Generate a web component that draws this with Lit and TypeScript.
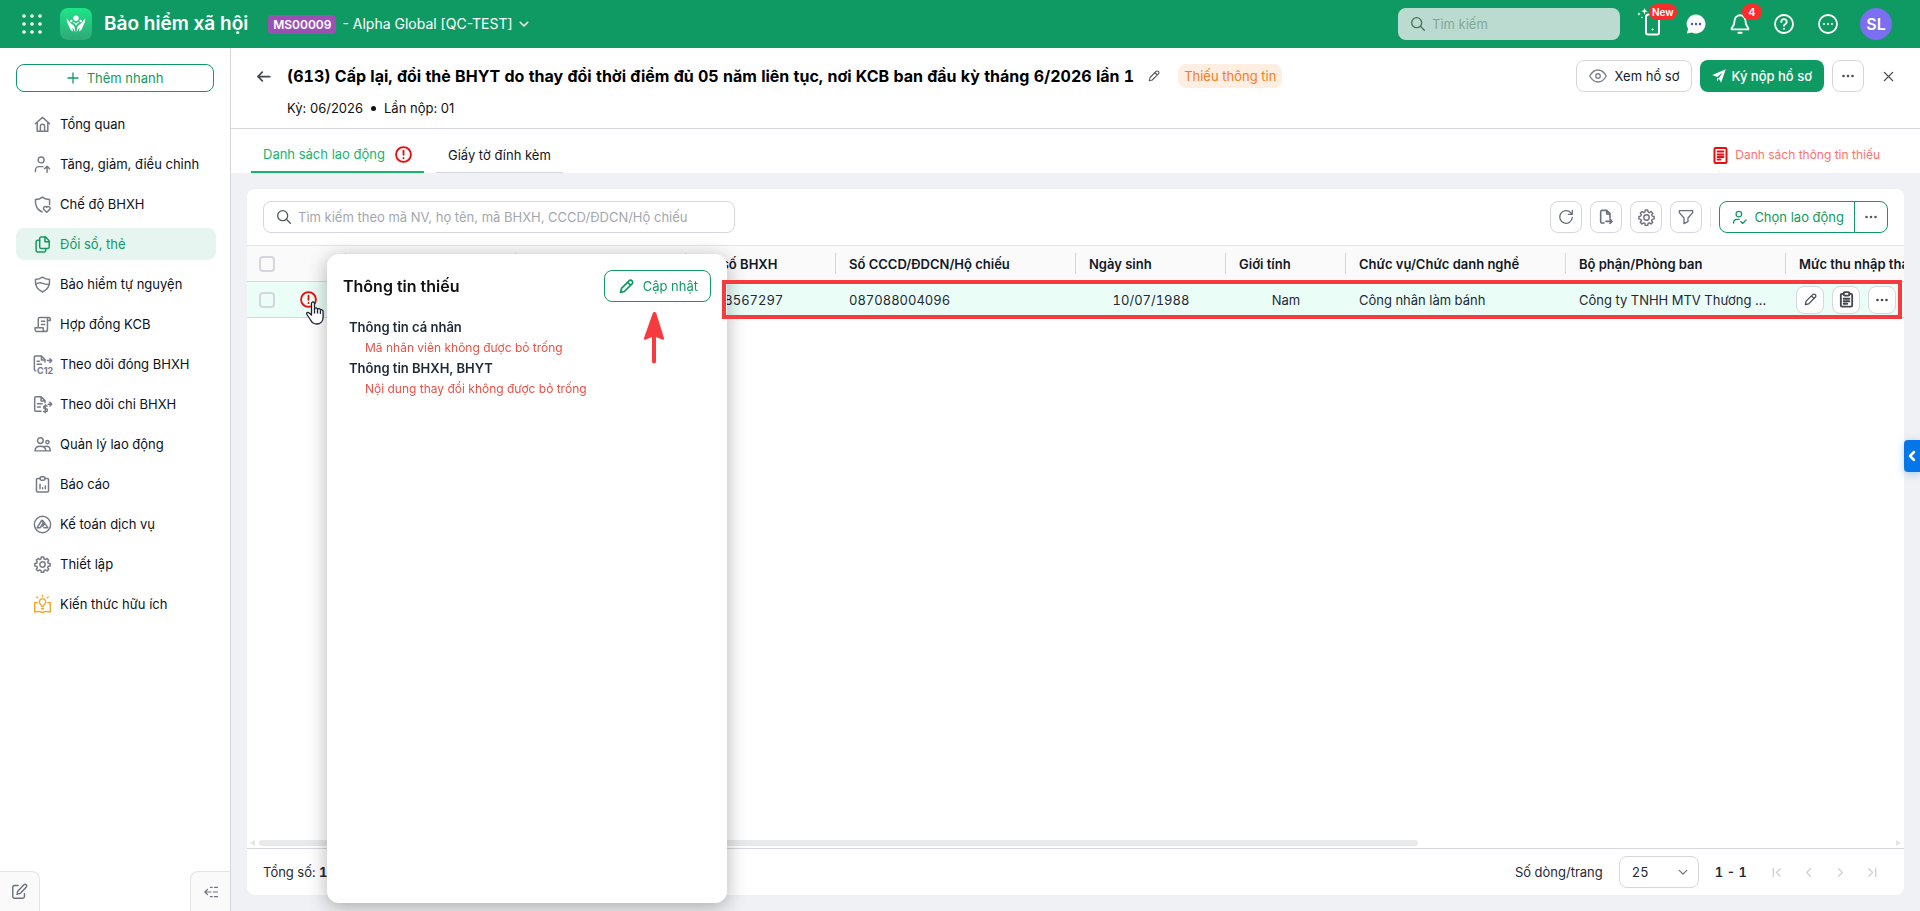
import { LitElement, html, css, svg, nothing, TemplateResult } from "lit";
import { customElement, property } from "lit/decorators.js";

/* Outline icons share a 24-unit grid and inherit the text colour. */
const ICONS: Record<string, TemplateResult> = {
  home: svg`<path d="M2 11 12 2l10 9M4.500 9v12.500h15V9M9 21.500v-7a3 3 0 0 1 6 0v7"/>`,
  userUp: svg`<circle cx="10" cy="5.500" r="4.200"/><path d="M2 22v-2a5 5 0 0 1 5-5h5.500M18.500 23v-8M15 18l3.500-3.500L22 18"/>`,
  shieldHeart: svg`<path d="M22 12V5c-4 0-7-1-10-3.500C9 4 6 5 2 5c-.500 8 2 14.500 9.500 17.500"/><path d="m18 23-4-3.800a2.500 2.500 0 0 1 4-3.400 2.500 2.500 0 0 1 4 3.400z"/>`,
  copyDoc: svg`<path d="M10 1.500h6.500l5 5.500v8.500a2 2 0 0 1-2 2H10a2 2 0 0 1-2-2v-12a2 2 0 0 1 2-2z"/><path d="M15.500 1.500V8h6M8 6H5a2 2 0 0 0-2 2v12.500a2 2 0 0 0 2 2h9.500a2 2 0 0 0 2-2v-3"/>`,
  shield: svg`<path d="M12 1.500c3 2.200 6 3.300 10 3.300.5 8-2 14.500-10 17.700C4 19.300 1.500 12.800 2 4.800c4 0 7-1.100 10-3.300z"/><path d="M2.500 12c3.500-2.500 6.500-3 9.500-1.500s6 1.500 9.500 1.500"/>`,
  scroll: svg`<path d="M6 16.500V4.500A2.500 2.500 0 0 1 8.500 2H21a2 2 0 0 1 2 2v2.500h-4M19 6.500v12.500a3 3 0 0 1-3 3H4.500a3 3 0 0 1-3-3v-2.500H13V19a3 3 0 0 0 3 3M10.500 7.500H15M10.500 12H15M19 6.500V4a2 2 0 0 1 2-2"/>`,
  docC12: svg`<path d="M2.500 21H2A1.500 1.500 0 0 1 .500 19.500v-18A1.500 1.500 0 0 1 2 0h8.500l5 5v3.500M10.500 0v5.500h5M4.500 7.500h3M4.500 11.500h6M19 6.500h5.500M22.500 4 25 6.500 22.500 9"/>`,
  docCoin: svg`<path d="M10 21.500H2.500A1.500 1.500 0 0 1 1 20V2.500A1.500 1.500 0 0 1 2.500 1H10l5.500 5.500V9.500M10 1v6h5.500M5 11h6.500M5 15.500h4M20 11.500h4.500M22.500 9l2.500 2.500-2.500 2.500M18.500 14h-3a1.900 1.900 0 0 0 0 4h1.500a1.900 1.900 0 0 1 0 4h-3.500M16 12.500v11"/>`,
  users: svg`<circle cx="9" cy="6.500" r="4"/><circle cx="19" cy="8.500" r="2.300"/><path d="M1.500 21c0-4.500 2.500-6.500 7.500-6.500s7.500 2 7.500 6.500zM15 14.800c4.500-1.500 8 1 8 6.200h-6.500"/>`,
  report: svg`<path d="M9 3.500H5A1.500 1.500 0 0 0 3.500 5v16A1.500 1.500 0 0 0 5 22.500h14a1.500 1.500 0 0 0 1.500-1.500V5A1.500 1.500 0 0 0 19 3.500h-4"/><rect x="8.500" y="1" width="7" height="5" rx="2"/><path d="M8.500 11.500v6.500M12.200 16.500V18M16 14v4"/>`,
  amis: svg`<circle cx="12" cy="12" r="11.500"/><path d="M4.500 16.500 11 6l2 3.500-4 7H4.500M12.500 14.500l2.500-4.500 4.500 6.500h-5.500M12.500 6.500l2.500 3.500"/>`,
  gear: svg`<circle cx="12" cy="12" r="3.800"/><path d="M10.300 1.500h3.400l.6 2.700 1.800.8 2.300-1.500 2.400 2.400-1.500 2.300.8 1.800 2.700.6v3.400l-2.700.6-.8 1.800 1.500 2.300-2.400 2.400-2.300-1.500-1.800.8-.6 2.700h-3.400l-.6-2.700-1.800-.8-2.300 1.500-2.400-2.400 1.500-2.300-.8-1.800-2.700-.6v-3.400l2.700-.6.8-1.800-1.500-2.300 2.400-2.400 2.300 1.500 1.800-.8z"/>`,
  idea: svg`<path d="M7.500 8a4.500 4.500 0 1 1 7 4c-1.200 1-1.400 1.800-1.500 3h-2c-.1-1.200-.3-2-1.500-3a5 5 0 0 1-2-4zM10.500 18h3M12 .5V-1M5 2.500 4 1.500M19 2.500l1-1M4.500 9.500H1V22.500c4-1 8-1 11 1 3-2 7-2 11-1V9.500h-3.500"/>`,
  plus: svg`<path d="M12 2v20M2 12h20"/>`,
  search: svg`<circle cx="10" cy="10" r="7.500"/><path d="m15.500 15.500 6 6"/>`,
  chevDown: svg`<path d="m3 8 9 9 9-9"/>`,
  chevLeft: svg`<path d="m16 4-8 8 8 8"/>`,
  chevRight: svg`<path d="m8 4 8 8-8 8"/>`,
  first: svg`<path d="M20 4l-8 8 8 8M5 3v18"/>`,
  last: svg`<path d="m4 4 8 8-8 8M19 3v18"/>`,
  back: svg`<path d="M22 12H3M10 5l-7 7 7 7"/>`,
  pencil: svg`<path d="m2.500 21.500 1.500-6.500L16 3a3.200 3.200 0 0 1 4.800 0 3.200 3.200 0 0 1 0 4.800L8.500 20zM14 5.500l4.500 4.500"/>`,
  eye: svg`<path d="M1 12c3-5.500 6.500-8 11-8s8 2.500 11 8c-3 5.500-6.500 8-11 8s-8-2.500-11-8z"/><circle cx="12" cy="12" r="3"/>`,
  close: svg`<path d="m3 3 18 18M21 3 3 21"/>`,
  refresh: svg`<path d="M21.500 12.500A9.500 9.500 0 1 1 19 5.500l2.500 2.500M21.500 2v6h-6"/>`,
  export: svg`<path d="M9 21H6a2 2 0 0 1-2-2V4a2 2 0 0 1 2-2h7l5 5v7M13 2v5.500h5M12 18.500h9M18 15.500l3 3-3 3"/>`,
  filter: svg`<path d="M2 2.500h20v3l-7 8V19l-6 3v-8.500l-7-8z"/>`,
  userCheck: svg`<circle cx="11" cy="6.500" r="4.500"/><path d="M2.500 21c0-4 2.500-6 6-6h3M14 18.500l3 3 5.500-5.500"/>`,
  clipboard: svg`<path d="M8 4H5.500A1.500 1.500 0 0 0 4 5.500v15A1.500 1.500 0 0 0 5.500 22h13a1.500 1.500 0 0 0 1.500-1.500v-15A1.500 1.500 0 0 0 18.500 4H16"/><rect x="8" y="1.500" width="8" height="5" rx="1.500"/><path d="M8 11h8M8 14.500h8M8 18h5"/>`,
  alert: svg`<circle cx="12" cy="12" r="10.500"/><path d="M12 6.500v6M12 17v.2"/>`,
  missing: svg`<rect x="3.500" y="1.500" width="17" height="21" rx="1.500"/><path d="M8 6.500h8M8 10.500h8M8 14h8M8 17.500h4"/>`,
  bell: svg`<path d="M12 1.500A6.500 6.500 0 0 0 5.500 8c0 5-1.500 6.500-3.500 9v1.500h20V17c-2-2.500-3.500-4-3.500-9A6.500 6.500 0 0 0 12 1.500zM10 22.500h4"/>`,
  help: svg`<circle cx="12" cy="12" r="10.800"/><path d="M8.800 9.500A3.200 3.200 0 1 1 13.500 12.200c-1 .6-1.500 1.100-1.500 1.800M12 17.500v.2"/>`,
  compose: svg`<path d="M10 3.500H5A2.500 2.500 0 0 0 2.500 6v13A2.500 2.500 0 0 0 5 21.500h11.500A2.500 2.500 0 0 0 19 19v-4M8.500 16l1-4.500 8.800-9a2.300 2.300 0 0 1 3.300 3.200L13 14.700z"/>`,
  collapse: svg`<path d="M12 12H2M6 7.500 1.500 12 6 16.500M11 4h3M18 4h5M16 12h7M11 20h3M18 20h5"/>`,
};

const DOTS = svg`<g fill="currentColor" stroke="none"><circle cx="3" cy="12" r="2.600"/><circle cx="12" cy="12" r="2.600"/><circle cx="21" cy="12" r="2.600"/></g>`;

function icon(name: string, size = 18, width = 2) {
  return html`<svg class="icon" width=${size} height=${size} viewBox="0 0 24 24" fill="none" stroke="currentColor"
    stroke-width=${width} stroke-linecap="round" stroke-linejoin="round" overflow="visible" aria-hidden="true">
    ${name === "dots" ? DOTS : ICONS[name]}
  </svg>`;
}

const base = css`
  * { box-sizing: border-box; }
  button, input, select { font: inherit; color: inherit; margin: 0; }
  button { cursor: pointer; padding: 0; background: none; border: 0; display: inline-flex; align-items: center; justify-content: center; white-space: nowrap; }
  a { color: inherit; text-decoration: none; }
  .icon { display: block; flex: none; }
  .outlined { height: 32px; border: 1px solid #d5d7dc; border-radius: 8px; background: #fff; }
  .square { width: 32px; color: #4b4f57; }
  .green { border-color: #109a63; color: #109a63; }
`;

@customElement("top-bar")
class TopBar extends LitElement {
  static styles = [base, css`
    :host { display: flex; align-items: center; height: 48px; background: #109a63; color: #fff; padding: 0 28px 0 20px; flex: none; }
    .apps { width: 24px; height: 24px; }
    .logo { margin-left: 16px; display: block; }
    .name { font-size: 19px; line-height: 28px; font-weight: 600; margin: 0 0 0 12px; white-space: nowrap; }
    .company { margin-left: 20px; gap: 6px; font-size: 14px; white-space: nowrap; }
    .code { background: #9b51b4; border-radius: 4px; padding: 0 5px; line-height: 19px; font-size: 12px; font-weight: 600; }
    .search { margin-left: auto; width: 222px; height: 32px; display: flex; align-items: center; gap: 6px; padding: 0 12px; background: #bcdbd0; border-radius: 8px; color: #47705f; }
    .search input { flex: 1; min-width: 0; border: 0; padding: 0; background: none; outline: 0; font-size: 13px; }
    .search input::placeholder { color: #82a799; opacity: 1; }
    .actions { display: flex; align-items: center; gap: 12px; margin-left: 16px; }
    .action { position: relative; width: 32px; height: 32px; }
    .badge { position: absolute; left: 18px; top: -4px; height: 16px; min-width: 20px; padding: 0 6px; border-radius: 8px; background: #fb2c2c; font-size: 11px; line-height: 16px; font-weight: 600; }
    .new { padding: 0 3px; left: 13px; font-size: 10px; }
    .avatar { width: 32px; height: 32px; border-radius: 50%; background: #7b6ef0; font-size: 16px; font-weight: 600; margin-left: 4px; }
  `];
  render() {
    return html`
      <button class="apps" aria-label="Ứng dụng">
        <svg width="20" height="20" viewBox="0 0 20 20" fill="#fff">
          ${[2, 10, 18].map((y) => [2, 10, 18].map((x) => svg`<circle cx=${x} cy=${y} r="1.800"/>`))}
        </svg>
      </button>
      <svg class="logo" width="32" height="32" viewBox="0 0 32 32" aria-hidden="true">
        <defs><linearGradient id="lg" x1="0" y1="0" x2="0" y2="1"><stop offset="0" stop-color="#1de587"/><stop offset="1" stop-color="#30a878"/></linearGradient></defs>
        <rect width="32" height="32" rx="8" fill="url(#lg)"/>
        <g fill="#fff"><circle cx="16" cy="10.300" r="2.700"/><circle cx="11.300" cy="13" r="1.200"/><circle cx="20.700" cy="13" r="1.200"/>
          <path d="M6.700 10.500c2.300 2 3.300 4.700 5.300 5.700 2.500 1.300 3.300 3.300 3.200 8.300-.6-2.500-1.700-3.800-3.200-4.800.7 1.300 1 2.300 1 3.800-2-.8-3-2.500-3.700-4.500C8.600 16.800 6.700 14.500 6.700 10.500z"/>
          <path d="M25.300 10.500c-2.300 2-3.300 4.700-5.300 5.700-2.500 1.300-3.300 3.300-3.200 8.300.6-2.500 1.700-3.800 3.200-4.800-.7 1.300-1 2.300-1 3.800 2-.8 3-2.500 3.700-4.500.7-2.200 2.600-4.500 2.600-8.500z"/>
          <path d="M12.500 14c1.800 0 2.800.6 3.500 1.500.7-.9 1.700-1.500 3.500-1.500-1.800.9-2.800 2.300-3.500 4-.7-1.700-1.700-3.100-3.500-4z"/></g>
      </svg>
      <h1 class="name">Bảo hiểm xã hội</h1>
      <button class="company"><span class="code">MS00009</span><span>- Alpha Global [QC-TEST]</span>${icon("chevDown", 10, 3.4)}</button>
      <label class="search">${icon("search", 16)}<input type="search" placeholder="Tìm kiếm" aria-label="Tìm kiếm" /></label>
      <div class="actions">
        <button class="action" aria-label="Ứng dụng di động">
          <svg width="32" height="32" viewBox="0 0 32 32" fill="none" stroke="#fff" stroke-width="2" stroke-linecap="round">
            <path d="M13 6.500h-.5A2.500 2.500 0 0 0 10 9v15.500a2 2 0 0 0 2 2h9a2 2 0 0 0 2-2V12"/><circle cx="16.500" cy="21.500" r=".6" stroke-width="1"/>
            <path d="m8.500 0 .9 2.300 2.300.9-2.300.9-.9 2.300-.9-2.300-2.300-.9 2.300-.9z" fill="#fff" stroke="none"/><path d="m3 4.200.5 1.300 1.300.5-1.300.5L3 7.800l-.5-1.300L1.200 6l1.300-.5z" fill="#fff" stroke="none"/>
            <circle cx="6" cy="9.500" r=".8" fill="#fff" stroke="none"/>
          </svg><span class="badge new">New</span></button>
        <button class="action" aria-label="Trò chuyện">
          <svg width="20" height="20" viewBox="0 0 20 20"><path fill="#fff" d="M10 .5a9.500 9.500 0 1 1-4.300 18L.8 19.500l1.300-4.500A9.500 9.500 0 0 1 10 .5z"/><g fill="#3c50e0"><circle cx="6" cy="10" r="1.200"/><circle cx="10" cy="10" r="1.200"/><circle cx="14" cy="10" r="1.200"/></g></svg></button>
        <button class="action" aria-label="Thông báo">${icon("bell", 20, 2.2)}<span class="badge">4</span></button>
        <button class="action" aria-label="Trợ giúp">${icon("help", 20, 2.2)}</button>
        <button class="action" aria-label="Thêm">
          <svg width="20" height="20" viewBox="0 0 20 20" fill="#fff"><circle cx="10" cy="10" r="9" fill="none" stroke="#fff" stroke-width="1.800"/><circle cx="6" cy="10" r="1"/><circle cx="10" cy="10" r="1"/><circle cx="14" cy="10" r="1"/></svg></button>
        <button class="action avatar" aria-label="Tài khoản">SL</button>
      </div>`;
  }
}

const NAV: [string, string][] = [
  ["home", "Tổng quan"],
  ["userUp", "Tăng, giảm, điều chỉnh"],
  ["shieldHeart", "Chế độ BHXH"],
  ["copyDoc", "Đổi sổ, thẻ"],
  ["shield", "Bảo hiểm tự nguyện"],
  ["scroll", "Hợp đồng KCB"],
  ["docC12", "Theo dõi đóng BHXH"],
  ["docCoin", "Theo dõi chi BHXH"],
  ["users", "Quản lý lao động"],
  ["report", "Báo cáo"],
  ["amis", "Kế toán dịch vụ"],
  ["gear", "Thiết lập"],
  ["idea", "Kiến thức hữu ích"],
];

@customElement("side-nav")
class SideNav extends LitElement {
  @property() active = "copyDoc";
  static styles = [base, css`
    :host { display: flex; flex-direction: column; width: 231px; flex: none; background: #fff; border-right: 1px solid #d5d7dc; padding-top: 16px; }
    .quick { margin: 0 16px; height: 28px; gap: 8px; }
    nav { display: flex; flex-direction: column; gap: 8px; padding: 16px 14px 0 16px; }
    .item { height: 32px; display: flex; align-items: center; gap: 8px; padding-left: 16px; border-radius: 8px; color: #0b1120; white-space: nowrap; }
    .item .icon, .glyph { color: #767b87; }
    .item.active, .item.active .icon { color: #109a63; }
    .item.active { background: #e6f5ef; }
    .item.idea .icon { color: #f9a72b; }
    .glyph { width: 20px; display: flex; justify-content: center; position: relative; }
    .c12 { position: absolute; left: 5px; bottom: -2px; font-size: 9px; line-height: 8px; font-weight: 700; background: #fff; }
    .feet { margin-top: auto; display: flex; justify-content: space-between; color: #6b707c; }
    .foot { width: 40px; height: 40px; background: #fafafa; border: 1px solid #e3e5e8; border-bottom: 0; }
    .foot.left { border-left: 0; border-top-right-radius: 8px; }
    .foot.right { border-right: 0; border-top-left-radius: 8px; }
  `];
  render() {
    return html`
      <button class="outlined green quick">${icon("plus", 12, 2.6)}Thêm nhanh</button>
      <nav>
        ${NAV.map(([key, label]) => html`
          <a href="#${key}" class="item ${key} ${key === this.active ? "active" : ""}">
            <span class="glyph">${icon(key, 17, 2.1)}${key === "docC12" ? html`<span class="c12">C12</span>` : nothing}</span>
            <span>${label}</span>
          </a>`)}
      </nav>
      <div class="feet">
        <button class="foot left" aria-label="Góp ý">${icon("compose", 17)}</button>
        <button class="foot right" aria-label="Thu gọn">${icon("collapse", 14)}</button>
      </div>`;
  }
}

@customElement("record-header")
class RecordHeader extends LitElement {
  static styles = [base, css`
    :host { display: block; background: #fff; flex: none; }
    .head { display: flex; align-items: flex-start; height: 81px; padding: 12px 16px 0 20px; border-bottom: 1px solid #d5d7dc; }
    .back { width: 24px; height: 32px; color: #44474e; }
    .text { margin-left: 12px; flex: 1; min-width: 0; }
    .line { display: flex; align-items: center; height: 32px; }
    h2 { margin: 0; font-size: 16px; line-height: 24px; font-weight: 700; font-variant-numeric: tabular-nums; color: #000; white-space: nowrap; }
    .edit { color: #55585f; margin: 0 16px 0 12px; width: 16px; height: 16px; }
    .tag { background: #ffeee2; color: #fb7a1b; line-height: 24px; padding: 0 6px; border-radius: 8px; white-space: nowrap; }
    .meta { display: flex; gap: 8px; line-height: 20px; margin-top: 6px; color: #111; align-items: center; }
    .dot { width: 5px; height: 5px; border-radius: 50%; background: #111; }
    .buttons { display: flex; gap: 8px; }
    .view { padding: 0 12px; gap: 8px; color: #111827; }
    .view .icon { color: #7b808b; }
    .sign { height: 32px; border-radius: 8px; padding: 0 12px; gap: 5px; background: #109a63; color: #fff; font-weight: 500; }
    .close { width: 32px; height: 32px; color: #44474e; }
    .tabs { display: flex; height: 44px; padding: 0 40px 0 20px; gap: 12px; }
    .tab { padding: 8px 12px 0; gap: 10px; height: 44px; color: #111827; border-bottom: 1px solid #d5d7dc; }
    .tab.on { color: #14b56c; border-bottom: 2px solid #14b56c; }
    .tab .icon { color: #e60f0f; }
    .missing { margin-left: auto; padding-top: 8px; display: flex; align-items: center; gap: 6px; color: #ff6f6a; font-size: 12px; }
    .missing .icon { color: #e60f0f; }
  `];
  render() {
    return html`
      <div class="head">
        <button class="back" aria-label="Quay lại">${icon("back", 15, 2.8)}</button>
        <div class="text">
          <div class="line">
            <h2>(613) Cấp lại, đổi thẻ BHYT do thay đổi thời điểm đủ 05 năm liên tục, nơi KCB ban đầu kỳ tháng 6/2026 lần 1</h2>
            <button class="edit" aria-label="Sửa tên">${icon("pencil", 12, 2.2)}</button>
            <span class="tag">Thiếu thông tin</span>
          </div>
          <div class="meta"><span>Kỳ: 06/2026</span><span class="dot"></span><span>Lần nộp: 01</span></div>
        </div>
        <div class="buttons">
          <button class="outlined view">${icon("eye", 18, 1.8)}Xem hồ sơ</button>
          <button class="sign"><svg width="14" height="14" viewBox="0 0 15 15" fill="currentColor"><path d="M14.800.200.200 6.500l5.300 2L11 4.200 7.200 9.800l2.500 5z"/><path d="m5.500 9.500 2 .8-2 3.200z"/></svg>Ký nộp hồ sơ</button>
          <button class="outlined square" aria-label="Khác">${icon("dots", 12)}</button>
          <button class="close" aria-label="Đóng">${icon("close", 11, 3)}</button>
        </div>
      </div>
      <div class="tabs" role="tablist">
        <button class="tab on" role="tab" aria-selected="true">Danh sách lao động ${icon("alert", 17, 2.6)}</button>
        <button class="tab" role="tab" aria-selected="false">Giấy tờ đính kèm</button>
        <a class="missing" href="#missing">${icon("missing", 17, 2.8)}Danh sách thông tin thiếu</a>
      </div>`;
  }
}

@customElement("worker-grid")
class WorkerGrid extends LitElement {
  static styles = [base, css`
    :host { display: flex; flex-direction: column; flex: 1; min-height: 0; min-width: 0; background: #fff; border-radius: 8px; overflow: hidden; }
    .bar { display: flex; align-items: center; gap: 8px; padding: 12px 16px; }
    .search { width: 472px; display: flex; align-items: center; gap: 6px; padding: 0 12px; color: #55585f; margin-right: auto; }
    .search input { flex: 1; min-width: 0; border: 0; padding: 0; outline: 0; background: none; }
    .search input::placeholder { color: #a3a7ae; opacity: 1; }
    .bar .square { color: #6b707c; }
    .sep { width: 1px; height: 20px; background: #e3e5e8; }
    .split { display: flex; }
    .pick { padding: 0 10px 0 12px; gap: 7px; border-radius: 8px 0 0 8px; }
    .drop { width: 34px; border-radius: 0 8px 8px 0; margin-left: -1px; }
    .drop .icon { color: #55585f; }
    .scroll { flex: 1; min-height: 0; overflow: hidden; border-top: 1px solid #e3e5e8; }
    table { border-collapse: separate; border-spacing: 0; table-layout: fixed; width: 2004px; color: #111827; }
    th, td { height: 36px; padding: 0 13px; text-align: left; white-space: nowrap; overflow: hidden; text-overflow: ellipsis; border-bottom: 1px solid #d5d7dc; }
    th { background: #fafafa; font-weight: 600; background-image: linear-gradient(#d5d7dc, #d5d7dc); background-size: 1px 21px; background-position: right 7px; background-repeat: no-repeat; }
    td { background: #eafdf7; color: #1f2937; font-variant-numeric: tabular-nums; }
    .center { text-align: center; }
    .pickcell { padding: 0 12px; }
    .inline { display: flex; align-items: center; gap: 25px; color: #e60f0f; }
    input[type="checkbox"] { appearance: none; display: block; width: 16px; height: 16px; border: 2px solid #d5d7dc; border-radius: 4px; background: transparent; }
    .acts { position: sticky; right: 0; padding: 0 8px; }
    .actrow { display: flex; gap: 8px; justify-content: flex-end; }
    .act { width: 28px; height: 28px; flex: none; color: #44474e; }
    .track { height: 12px; display: flex; align-items: flex-end; gap: 4px; padding: 0 3px 2px; }
    .rail { flex: 1; }
    .thumb { height: 6px; width: 71%; border-radius: 3px; background: #e8e9eb; }
    .arrow { fill: #e3e5e8; }
    footer { display: flex; align-items: center; border-top: 1px solid #d5d7dc; height: 47px; padding: 0 16px; color: #1f2937; font-variant-numeric: tabular-nums; }
    .rows { margin-left: auto; margin-right: 16px; }
    .select { position: relative; display: block; color: #6b707c; }
    select { appearance: none; width: 80px; height: 32px; padding: 0 12px; color: #1f2937; font-variant-numeric: tabular-nums; }
    .select .icon { position: absolute; right: 11px; top: 11px; pointer-events: none; }
    .range { font-weight: 600; margin: 0 13px 0 16px; }
    .pager { display: flex; color: #cfd1d5; }
    .pager button { width: 32px; height: 32px; }
  `];
  render() {
    const cols = [99, 170, 170, 150, 240, 150, 120, 220, 220, 345, 120];
    return html`
      <div class="bar">
        <label class="outlined search">${icon("search", 16)}<input type="search" placeholder="Tìm kiếm theo mã NV, họ tên, mã BHXH, CCCD/ĐDCN/Hộ chiếu" aria-label="Tìm kiếm lao động" /></label>
        <button class="outlined square" aria-label="Tải lại">${icon("refresh", 16)}</button>
        <button class="outlined square" aria-label="Xuất khẩu">${icon("export", 16, 2.4)}</button>
        <button class="outlined square" aria-label="Thiết lập">${icon("gear", 17)}</button>
        <button class="outlined square" aria-label="Bộ lọc">${icon("filter", 16)}</button>
        <span class="sep"></span>
        <div class="split">
          <button class="outlined green pick">${icon("userCheck", 15)}Chọn lao động</button>
          <button class="outlined green drop" aria-label="Khác">${icon("dots", 12)}</button>
        </div>
      </div>
      <div class="scroll">
        <table>
          <colgroup>${cols.map((w) => html`<col style="width:${w}px" />`)}</colgroup>
          <thead><tr>
            <th class="pickcell"><input type="checkbox" aria-label="Chọn tất cả" /></th>
            <th></th><th></th>
            <th>Mã số BHXH</th><th>Số CCCD/ĐDCN/Hộ chiếu</th><th>Ngày sinh</th><th>Giới tính</th>
            <th>Chức vụ/Chức danh nghề</th><th>Bộ phận/Phòng ban</th><th>Mức thu nhập tháng</th><th></th>
          </tr></thead>
          <tbody><tr>
            <td class="pickcell"><div class="inline"><input type="checkbox" aria-label="Chọn dòng" />${icon("alert", 17, 2.6)}</div></td>
            <td></td><td></td>
            <td>8708567297</td><td>087088004096</td><td class="center">10/07/1988</td><td class="center">Nam</td>
            <td>Công nhân làm bánh</td><td>Công ty TNHH MTV Thương mại Dịch vụ</td><td></td>
            <td class="acts"><div class="actrow">
              <button class="outlined act" aria-label="Sửa">${icon("pencil", 13, 2.2)}</button>
              <button class="outlined act" aria-label="Chi tiết">${icon("clipboard", 17, 2.6)}</button>
              <button class="outlined act" aria-label="Khác">${icon("dots", 12)}</button>
            </div></td>
          </tr></tbody>
        </table>
      </div>
      <div class="track">
        <svg class="arrow" width="5" height="6" viewBox="0 0 5 6"><path d="M5 0v6L0 3z"/></svg>
        <div class="rail"><div class="thumb"></div></div>
        <svg class="arrow" width="5" height="6" viewBox="0 0 5 6"><path d="M0 0v6l5-3z"/></svg>
      </div>
      <footer>
        <span>Tổng số: <b>1</b></span>
        <label class="rows" for="size">Số dòng/trang</label>
        <span class="select"><select id="size" class="outlined"><option>25</option><option>50</option></select>${icon("chevDown", 10, 3)}</span>
        <span class="range">1 - 1</span>
        <div class="pager">
          <button aria-label="Trang đầu">${icon("first", 11, 3)}</button>
          <button aria-label="Trang trước">${icon("chevLeft", 11, 3)}</button>
          <button aria-label="Trang sau">${icon("chevRight", 11, 3)}</button>
          <button aria-label="Trang cuối">${icon("last", 11, 3)}</button>
        </div>
      </footer>`;
  }
}

@customElement("missing-popup")
class MissingPopup extends LitElement {
  static styles = [base, css`
    :host { display: block; background: #fff; border-radius: 12px; padding: 16px; box-shadow: 0 4px 20px rgba(0, 0, 0, .3); }
    header { display: flex; align-items: center; justify-content: space-between; }
    h3 { margin: 0; font-size: 16px; font-weight: 600; color: #111; }
    .update { padding: 0 12px 0 14px; gap: 9px; }
    dl { margin: 15px 0 0; padding: 0 6px; line-height: 21px; }
    dt { font-weight: 600; color: #1f2937; line-height: 20px; }
    dd { margin: 0 0 0 16px; color: #ee4f45; font-size: 12px; }
  `];
  render() {
    return html`
      <header><h3>Thông tin thiếu</h3><button class="outlined green update">${icon("pencil", 15, 2.8)}Cập nhật</button></header>
      <dl>
        <dt>Thông tin cá nhân</dt><dd>Mã nhân viên không được bỏ trống</dd>
        <dt>Thông tin BHXH, BHYT</dt><dd>Nội dung thay đổi không được bỏ trống</dd>
      </dl>`;
  }
}

@customElement("app-root")
class AppRoot extends LitElement {
  static styles = [base, css`
    :host { display: flex; flex-direction: column; height: 100vh; font-family: Inter, "Noto Sans", sans-serif; font-size: 13px; line-height: 20px; color: #111827; overflow: hidden; background: #f0f1f4; }
    .body { display: flex; flex: 1; min-height: 0; }
    main { position: relative; flex: 1; min-width: 0; display: flex; flex-direction: column; }
    .content { position: relative; flex: 1; min-height: 0; display: flex; padding: 16px; }
    missing-popup { position: absolute; left: 96px; top: 81px; width: 400px; bottom: 8px; }
    .frame { position: absolute; left: 491px; right: 18px; top: 107px; height: 39px; border: 4px solid #f53b3d; pointer-events: none; }
    .pointer { position: absolute; left: 413px; top: 139px; }
    .cursor { position: absolute; left: 74px; top: 128px; }
    .handle { position: absolute; right: 0; top: 392px; width: 16px; height: 32px; background: #0576e8; color: #fff; border-radius: 4px 0 0 4px; box-shadow: 0 2px 8px rgba(5, 118, 232, .3); }
  `];
  render() {
    return html`
      <top-bar></top-bar>
      <div class="body">
        <side-nav></side-nav>
        <main>
          <record-header></record-header>
          <div class="content">
            <worker-grid></worker-grid>
            <missing-popup role="dialog" aria-label="Thông tin thiếu"></missing-popup>
            <div class="frame"></div>
            <svg class="pointer" width="20" height="52" viewBox="0 0 20 52" fill="#f53b3d" aria-hidden="true">
              <path d="M10.500 0c1 0 1.600.6 2 2L20 26c.4 1.300-.6 2.200-2 1.500L12 25v24.500a2 2 0 0 1-4 0V25l-6 2.500c-1.400.7-2.400-.2-2-1.500L8.500 2c.4-1.400 1-2 2-2z"/>
            </svg>
            <svg class="cursor" width="20" height="24" viewBox="0 0 20 24" fill="#fff" stroke="#1a2233" stroke-width="1.300" stroke-linejoin="round" aria-hidden="true">
              <path d="M6.500 14V2.500c0-2 3-2 3 0V8c.3-1.500 3-1.400 3 .5.500-1.300 2.900-1 2.900.8.600-1 2.700-.7 2.700 1V16c0 4-2.500 7-6.500 7-3.500 0-4.800-1.500-6-4l-3.700-5.500c-1-1.700 1-2.700 2.300-1.500z"/><path d="M9.500 8v4.500M12.500 9v3.500M15.400 10v3" fill="none"/>
            </svg>
          </div>
          <button class="handle" aria-label="Mở bảng bên">${icon("chevLeft", 12, 5)}</button>
        </main>
      </div>`;
  }
}
